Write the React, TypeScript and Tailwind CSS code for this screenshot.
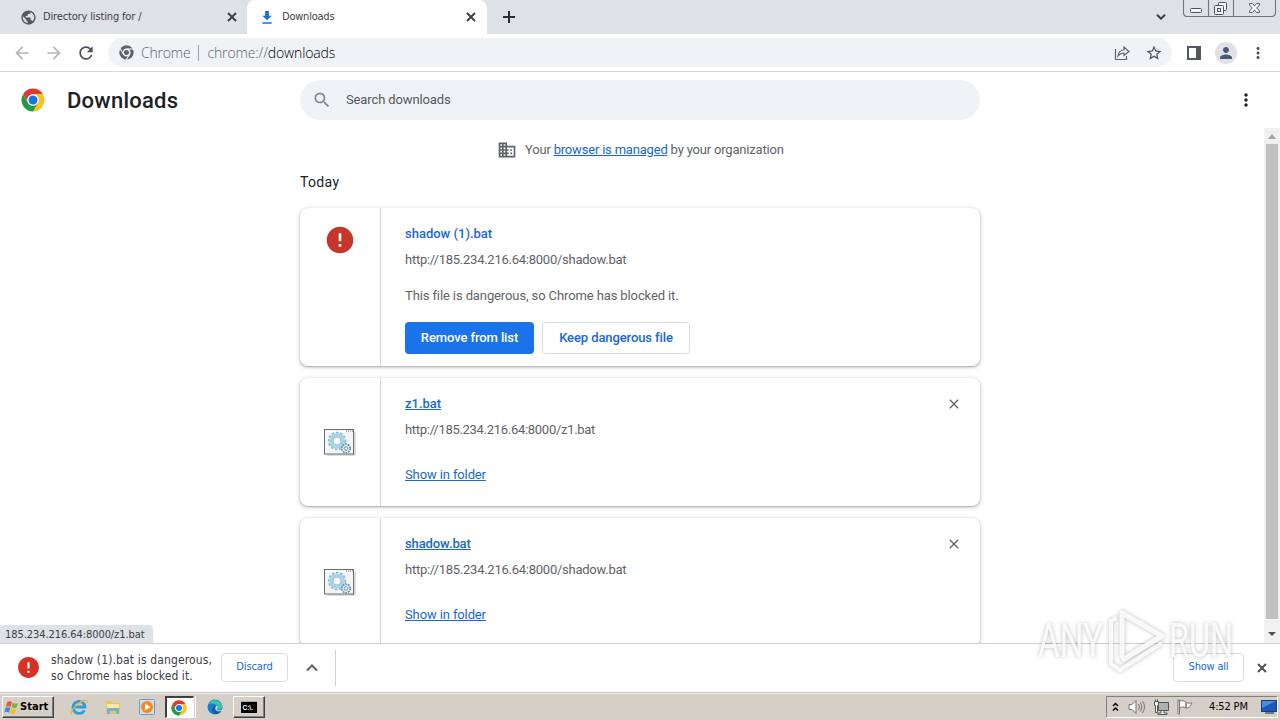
import React from 'react';
import {
  MdArrowBack,
  MdArrowForward,
  MdClose,
  MdDomain,
  MdError,
  MdMoreVert,
  MdPerson,
  MdPublic,
  MdRefresh,
  MdSearch,
  MdStarBorder,
} from 'react-icons/md';

const downloads = [
  { name: 'z1.bat', url: 'http://185.234.216.64:8000/z1.bat', nameTracking: 'tracking-[0px]', urlTracking: 'tracking-[-0.29px]' },
  { name: 'shadow.bat', url: 'http://185.234.216.64:8000/shadow.bat', nameTracking: 'tracking-[-0.1px]', urlTracking: 'tracking-[-0.25px]' },
];

const ChromeLogo: React.FC<{ className?: string }> = ({ className }) => {
  const blade = 'M2.04 6.25A11.5 11.5 0 0 1 21.96 6.25H12A5.75 5.75 0 0 0 7.02 14.875Z';
  return (
    <svg viewBox="0 0 24 24" className={className}>
      <circle cx="12" cy="12" r="6.5" fill="#fff" />
      <path d={blade} fill="#db3a2c" />
      <path d={blade} fill="#fcc31e" transform="rotate(120 12 12)" />
      <path d={blade} fill="#249a41" transform="rotate(240 12 12)" />
      <circle cx="12" cy="12" r="5.75" fill="#fff" />
      <circle cx="12" cy="12" r="4.5" fill="#1a73e8" />
    </svg>
  );
};

const ChromeMono: React.FC = () => (
  <svg viewBox="0 0 24 24" className="h-[15px] w-[15px]">
    <circle cx="12" cy="12" r="11.5" fill="#5f6368" />
    <circle cx="12" cy="12" r="5.2" fill="none" stroke="#f1f3f4" strokeWidth="2.4" />
    <g stroke="#f1f3f4" strokeWidth="1.8">
      <path d="M12 6.4H23" />
      <path d="M12 6.4H23" transform="rotate(120 12 12)" />
      <path d="M12 6.4H23" transform="rotate(240 12 12)" />
    </g>
  </svg>
);

const BoldClose: React.FC<{ className?: string }> = ({ className }) => (
  <svg viewBox="0 0 10 10" className={className} stroke="currentColor" strokeWidth="1.9">
    <path d="M1 1l8 8M9 1L1 9" />
  </svg>
);

const TabStrip: React.FC = () => (
  <div className="flex h-[34px] shrink-0 bg-[#dee1e8] text-[11px] text-[#3c4043]">
    <div className="flex w-[247px] items-center pl-5 pr-[10px]">
      <MdPublic className="h-[17px] w-[17px] text-[#55585d]" />
      <span className="ml-[6px] tracking-[-0.15px]">Directory listing for /</span>
      <BoldClose className="ml-auto h-[10px] w-[10px]" />
    </div>
    <div className="flex w-[240px] items-center rounded-t-lg bg-white pl-[14px] pr-[11px]">
      <svg viewBox="0 0 12 14" className="h-[13px] w-3" fill="#1a6ddb">
        <path d="M4 0h4v5h3L6 10 1 5h3zM1 12h10v1.6H1z" />
      </svg>
      <span className="ml-[9px] tracking-[-0.22px]">Downloads</span>
      <BoldClose className="ml-auto h-[10px] w-[10px]" />
    </div>
    <svg viewBox="0 0 12 12" className="ml-4 mt-[11px] h-3 w-3" stroke="#2b2e38" strokeWidth="2">
      <path d="M6 0v12M0 6h12" />
    </svg>
    <svg viewBox="0 0 10 6" className="ml-auto mt-[14px] h-[6px] w-[10px]" fill="none" stroke="#3c4043" strokeWidth="2">
      <path d="M1 .7l4 4 4-4" />
    </svg>
    <WindowControls />
  </div>
);

const WindowControls: React.FC = () => (
  <svg viewBox="0 0 94 17" className="ml-[17px] mr-[3px] h-[17px] w-[94px]" fill="none" stroke="#6f7680">
    <path d="M.5 -1v13.500q0 4 4 4h84q4 0 4-4V-1M25.500 0v16M50.500 0v16" strokeWidth="1.1" />
    <g stroke="#4c525b" fill="#f3f4f7">
      <rect x="7.500" y="8.500" width="11" height="4" rx="1" />
      <rect x="35.500" y="2.500" width="8" height="8" rx="1" />
      <rect x="31.500" y="5.500" width="9" height="9" rx="1" />
      <rect x="34.500" y="8.500" width="3" height="3" />
      <path d="M66.500 3.500h3l2 2.500 2-2.500h3v1.500l-2.800 3 2.800 3v1.500h-3l-2-2.500-2 2.500h-3V11l2.800-3-2.800-3z" strokeWidth=".9" />
    </g>
  </svg>
);

const Toolbar: React.FC = () => (
  <div className="flex h-[38px] shrink-0 items-center border-b border-[#d5d7da] bg-white text-[#5f6368]">
    <MdArrowBack className="ml-3 h-5 w-5 text-[#b4b6b9]" />
    <MdArrowForward className="ml-3 h-5 w-5 text-[#b4b6b9]" />
    <MdRefresh className="ml-3 h-5 w-5 text-[#4d5156]" />
    <div className="ml-3 flex h-[29px] w-[1064px] items-center rounded-full bg-[#f0f3f6] pl-[11px] pr-[9px] font-['Open_Sans','Noto_Sans',sans-serif] text-[14px] font-light">
      <ChromeMono />
      <span className="ml-[7px] tracking-[-0.2px]">Chrome</span>
      <span className="ml-2 h-4 w-px bg-[#9aa0a6]" />
      <span className="ml-2 tracking-[-0.13px]">
        chrome://<span className="text-black">downloads</span>
      </span>
      <svg viewBox="0 0 16 16" className="ml-auto h-4 w-4" fill="none" stroke="#5f6368" strokeWidth="1.2">
        <path d="M1.500 4v10.500h11V11M4 11c.5-4 2.500-6 6-6V2l5 4.500-5 4V8C7.500 8 5.500 9 4 11z" />
      </svg>
      <MdStarBorder className="ml-[15px] h-[18px] w-[18px] text-[#4d5156]" />
    </div>
    <svg viewBox="0 0 14 14" className="ml-[15px] h-[14px] w-[14px]">
      <rect x="1" y="1" width="12" height="12" fill="none" stroke="#55585d" strokeWidth="2" />
      <rect x="9" width="5" height="14" fill="#55585d" />
    </svg>
    <div className="ml-[14px] flex h-[22px] w-[22px] items-center justify-center rounded-full bg-[#dee1e6]">
      <MdPerson className="h-[18px] w-[18px] text-[#4a5878]" />
    </div>
    <MdMoreVert className="ml-3 h-[18px] w-[18px] text-[#4d5156]" />
  </div>
);

const BatchIcon: React.FC = () => (
  <svg viewBox="0 0 32 27" className="h-[27px] w-8">
    <path d="M3 26h28V3" fill="none" stroke="#b9b9b9" />
    <rect x=".5" y=".5" width="29" height="24.500" fill="#f4f5f7" stroke="#6b6e72" />
    <path d="M2 2.500h20" stroke="#fff" />
    <path d="M22 2h7" stroke="#666" strokeDasharray="1 1" />
    <circle cx="13" cy="12" r="8.300" fill="none" stroke="#83b9d2" strokeWidth="1.800" strokeDasharray="2.500 1.700" />
    <circle cx="13" cy="12" r="6" fill="none" stroke="#a9d4e6" strokeWidth="3.600" />
    <circle cx="13" cy="12" r="4" fill="#f7fafc" stroke="#80aabd" strokeWidth=".7" />
    <circle cx="22" cy="19.500" r="4.300" fill="#d9e9f0" stroke="#658fa7" strokeWidth="1.600" strokeDasharray="1.800 .9" />
    <circle cx="22" cy="19.500" r="1.700" fill="#fff" stroke="#6389a0" strokeWidth=".9" />
  </svg>
);

const PageHeader: React.FC = () => (
  <div className="flex h-14 shrink-0 items-center">
    <ChromeLogo className="ml-[21px] h-6 w-6" />
    <h1 className="ml-[22px] w-[233px] text-[22px] font-medium tracking-[0.25px] text-[#202124]">Downloads</h1>
    <div className="flex h-10 w-[680px] items-center rounded-full bg-[#f0f3f5] pl-3">
      <MdSearch className="h-5 w-5 text-[#80868b]" />
      <span className="ml-[14px] text-[13px] tracking-[-0.12px] text-[#55585c]">Search downloads</span>
    </div>
    <MdMoreVert className="ml-auto mr-6 h-5 w-5 text-[#202124]" />
  </div>
);

const cardClass = 'flex w-[680px] shrink-0 rounded-lg bg-white shadow-[0_1px_2px_rgba(60,64,67,0.35),0_1px_4px_1px_rgba(60,64,67,0.16)]';

const DownloadsPage: React.FC = () => (
  <main className="flex min-h-0 flex-1 flex-col bg-white font-[Roboto,sans-serif]">
    <PageHeader />
    <div className="flex min-h-0 flex-1">
      <div className="flex flex-1 flex-col overflow-hidden pl-[300px] text-[13px] text-[#5f6368]">
        <div className="mt-3 flex h-5 shrink-0 items-center pl-[197px]">
          <MdDomain className="h-5 w-5" />
          <span className="ml-2 tracking-[-0.19px]">
            Your <a className="text-[#1967d2] underline">browser is managed</a> by your organization
          </span>
        </div>
        <h2 className="mb-4 mt-3 h-5 shrink-0 text-[14px] leading-[21px] tracking-[0.35px] text-[#202124]">Today</h2>

        <div className={`${cardClass} h-[158px]`}>
          <div className="flex w-[81px] justify-center border-r border-[#d5d7da] pt-4">
            <MdError className="h-8 w-8 text-[#c5352a]" />
          </div>
          <div className="flex flex-col items-start pl-6 pt-4">
            <span className="h-5 font-medium leading-5 text-[#1967d2]">shadow (1).bat</span>
            <span className="mt-[6px] h-5 leading-5 tracking-[-0.25px]">http://185.234.216.64:8000/shadow.bat</span>
            <span className="mt-4 h-5 leading-5 tracking-[-0.11px]">This file is dangerous, so Chrome has blocked it.</span>
            <div className="mt-4 flex gap-2 font-medium">
              <button className="h-8 w-[129px] rounded bg-[#1a73e8] tracking-[-0.1px] text-white">Remove from list</button>
              <button className="h-8 w-[148px] rounded border border-[#dadce0] tracking-[-0.1px] text-[#1967d2]">Keep dangerous file</button>
            </div>
          </div>
        </div>

        {downloads.map((item) => (
          <div key={item.name} className={`${cardClass} mt-3 h-32`}>
            <div className="flex w-[81px] items-center border-r border-[#d5d7da] pl-6">
              <BatchIcon />
            </div>
            <div className="flex flex-1 flex-col items-start pl-6 pt-4">
              <a className={`h-5 font-medium leading-5 text-[#1967d2] underline ${item.nameTracking}`}>{item.name}</a>
              <span className={`mt-[6px] h-5 leading-5 ${item.urlTracking}`}>{item.url}</span>
              <a className="mt-[25px] h-5 leading-5 tracking-[-0.12px] text-[#1967d2] underline">Show in folder</a>
            </div>
            <MdClose className="mr-[18px] mt-[18px] h-4 w-4" />
          </div>
        ))}
      </div>
      <div className="flex w-4 flex-col items-center bg-[#f1f1f1]">
        <svg viewBox="0 0 16 16" className="h-4 w-4" fill="#a3a3a3">
          <path d="M4 11h8L8 6z" />
        </svg>
        <div className="w-3 flex-1 bg-[#c1c1c1]" />
        <svg viewBox="0 0 16 24" className="h-6 w-4" fill="#505050">
          <path d="M4 13h8l-4 4z" />
        </svg>
      </div>
    </div>
  </main>
);

const DownloadShelf: React.FC = () => (
  <div className="flex h-[49px] shrink-0 items-center border-t border-[#cfd1d4] bg-white pb-px">
    <MdError className="ml-4 h-[25px] w-[25px] text-[#d93025]" />
    <div className="ml-[10px] w-[170px] text-[12px] leading-4 text-[#3c4043]">
      <div className="whitespace-nowrap tracking-[0.14px]">shadow (1).bat is dangerous,</div>
      <div className="whitespace-nowrap tracking-[0.08px]">so Chrome has blocked it.</div>
    </div>
    <button className="h-[29px] w-[67px] rounded border border-[#dadce0] text-[11px] tracking-[-0.1px] text-[#1967d2]">Discard</button>
    <svg viewBox="0 0 12 8" className="ml-[18px] h-2 w-3" fill="none" stroke="#5f6368" strokeWidth="2">
      <path d="M1 6.500l5-5 5 5" />
    </svg>
    <div className="ml-[17px] h-9 w-px bg-[#cfd1d4]" />
    <button className="ml-auto h-[29px] w-[71px] rounded border border-[#dadce0] text-[11px] tracking-[-0.2px] text-[#1967d2]">Show all</button>
    <BoldClose className="ml-[13px] mr-[13px] h-[10px] w-[10px] text-[#4d5156]" />
  </div>
);

const raised = 'border border-t-white border-l-white border-b-[#404040] border-r-[#404040] shadow-[inset_-1px_-1px_0_#808080]';

const Taskbar: React.FC = () => (
  <div className="flex h-[28px] shrink-0 items-center border-t border-[#c3c5c6] bg-[#d6cfc7] pt-px shadow-[inset_0_1px_0_#f3f1ee] text-black">
    <div className={`ml-[2px] flex h-[22px] w-[52px] items-center bg-[#d6cfc7] pl-px ${raised}`}>
      <svg viewBox="0 0 16 16" className="h-[15px] w-[15px] shrink-0">
        <path d="M3.500 2q3-1.500 5 .3L7 7.500q-2-1.600-5-.3z" fill="#e9592b" />
        <path d="M9.300 3q2.500 1.500 5.700.3L13.500 8q-3 1.300-5.500-.2z" fill="#79b53a" />
        <path d="M1.700 8.200q3-1.200 5 .3L5.300 13.500q-2-1.600-5-.3z" fill="#338fd8" />
        <path d="M7.600 9q2.500 1.400 5.600.2L11.700 14q-3 1.200-5.500-.2z" fill="#f9bd24" />
      </svg>
      <span className="ml-px text-[11px] font-bold tracking-[0.05px]">Start</span>
    </div>
    <svg viewBox="0 0 18 18" className="ml-4 h-[18px] w-[18px]" fill="none">
      <path d="M14.300 12.300A6 6 0 1 1 15 9H4" stroke="#2e9de0" strokeWidth="2.800" />
      <path d="M1.500 16.500C-1 13 12 1 16.500 2.500c1 .5.400 2-.4 3.200" stroke="#edb83a" strokeWidth="1.300" />
    </svg>
    <svg viewBox="0 0 18 18" className="ml-4 h-[18px] w-[18px]">
      <path d="M2 3h6l1 2h7v11H2z" fill="#e8c65b" />
      <path d="M3 6h12v5H3z" fill="#fbeaa0" />
      <path d="M3 10h12v6h-3v-3H6v3H3z" fill="#6fb5d9" />
    </svg>
    <svg viewBox="0 0 18 18" className="ml-4 h-[18px] w-[18px]">
      <rect x="1.500" y="1.500" width="15" height="15" rx="1" fill="#cfdeea" stroke="#6d9bc2" />
      <circle cx="9" cy="9" r="6" fill="#f58a1f" />
      <path d="M7 5.500v7L12.500 9z" fill="#fff" />
    </svg>
    <div className="ml-[9px] flex h-[22px] w-[29px] items-center border-2 border-b border-r border-[#404040] border-b-white border-r-white bg-white pl-[4px]">
      <ChromeLogo className="h-4 w-4" />
    </div>
    <div className="ml-[1px] h-[22px] w-px bg-white" />
    <svg viewBox="0 0 16 16" className="ml-[11px] h-4 w-4">
      <circle cx="8" cy="8" r="7.500" fill="#137fce" />
      <path d="M1 6C3 0 13-1 15.500 7c.2 3-3 4-5.500 3 1-5-5-7-9-4z" fill="#39c5a5" />
      <path d="M10 6.500c-2 3-1 6 4.500 5-2 4-7 4.500-9 1.500-1.500-3 .5-6 4.500-6.500z" fill="#0c5cae" />
      <path d="M9.500 6.700c2 1 .2 2.500.5 3.500 1 1.500 4 1.500 5.800-.4V12l-2 .2C8 13 7 9 9.500 6.700z" fill="#d6cfc7" />
    </svg>
    <div className={`ml-[10px] flex h-[22px] w-8 items-center justify-center ${raised}`}>
      <svg viewBox="0 0 16 12" className="h-3 w-4">
        <rect width="16" height="12" fill="#000" />
        <path d="M0 .5h16" stroke="#a8a8a8" />
        <text x="1.500" y="9" fontSize="6.500" fontFamily="Liberation Sans, sans-serif" fontWeight="bold" fill="#fff">C:\.</text>
      </svg>
    </div>
    <div className="ml-auto mr-[2px] flex h-[22px] w-[172px] items-center border border-b-white border-l-[#808080] border-r-white border-t-[#808080] pl-[5px]">
      <svg viewBox="0 0 7 10" className="h-[10px] w-[7px]" fill="none" stroke="#000" strokeWidth="1.500">
        <path d="M1 4l2.500-2.500L6 4M1 8.500L3.500 6 6 8.500" />
      </svg>
      <svg viewBox="0 0 18 16" className="ml-[9px] h-4 w-[18px]" fill="none" stroke="#777">
        <path d="M1 5.500h3l4-4v13l-4-4H1z" fill="#f6f6f6" />
        <path d="M10.500 5q2 3 0 6M12.500 3.500q3 4.500 0 9M14.500 2q4 6 0 12" />
      </svg>
      <svg viewBox="0 0 16 16" className="ml-[7px] h-4 w-4" fill="#f6f6f6" stroke="#555">
        <path d="M5.500 3.500h10v8h-10z" fill="#aeb1b2" />
        <path d="M8 12v2H5v1.500h9V14h-3v-2" />
        <path d="M1.500 2.500h4v4h-1v7h-2v-7h-1zM2.500.500v2M4.500.500v2" />
      </svg>
      <svg viewBox="0 0 16 16" className="ml-2 h-4 w-4" fill="#f8f8f8" stroke="#777">
        <path d="M1 1h1.500v14H1z" />
        <path d="M2.500 2C6 1 7 2 9 3.500V9C7 8 5 7.500 2.500 9zM9 3.500c2 1 3 .5 6 .5-2 3-2 5-6 5z" />
      </svg>
      <span className="ml-4 whitespace-nowrap text-[11px] tracking-[-0.15px]">4:52 PM</span>
      <svg viewBox="0 0 16 14" className="ml-auto h-[14px] w-4">
        <rect x=".5" y=".5" width="15" height="11" fill="#1559bd" stroke="#223e68" />
        <path d="M1 1h14L1 8z" fill="#488be0" />
        <path d="M4 13h9" stroke="#4d6073" strokeWidth="1.500" />
      </svg>
    </div>
  </div>
);

const Watermark: React.FC = () => (
  <svg viewBox="0 0 204 76" className="pointer-events-none absolute left-[1034px] top-[602px] h-[76px] w-[204px] drop-shadow-[0_0_2px_rgba(0,0,0,0.3)]">
    <g fill="#fff" fillOpacity=".85" fontFamily="Roboto, sans-serif" fontSize="49">
      <text x="4" y="55" textLength="65" lengthAdjust="spacingAndGlyphs">ANY</text>
      <text x="135" y="55" textLength="64" lengthAdjust="spacingAndGlyphs">RUN</text>
    </g>
    <g fill="none" stroke="#fff" strokeOpacity=".85" strokeWidth="5" strokeLinejoin="round">
      <path d="M88 56V11l40 23-40 24" />
      <path d="M83 16l-6 3v43l9 6 42-27" strokeWidth="4" />
    </g>
  </svg>
);

const App: React.FC = () => (
  <div className="relative flex h-[720px] w-[1280px] flex-col overflow-hidden font-['DejaVu_Sans_Condensed','DejaVu_Sans',sans-serif]">
    <TabStrip />
    <Toolbar />
    <DownloadsPage />
    <DownloadShelf />
    <Taskbar />
    {/* link target shown while hovering */}
    <div className="absolute left-0 top-[625px] h-[18px] w-[153px] rounded-tr bg-[#dee1e6] pl-[5px] text-[11px] leading-[19px] tracking-[-0.07px] text-[#3c4043]">
      185.234.216.64:8000/z1.bat
    </div>
    <Watermark />
  </div>
);

export default App;
